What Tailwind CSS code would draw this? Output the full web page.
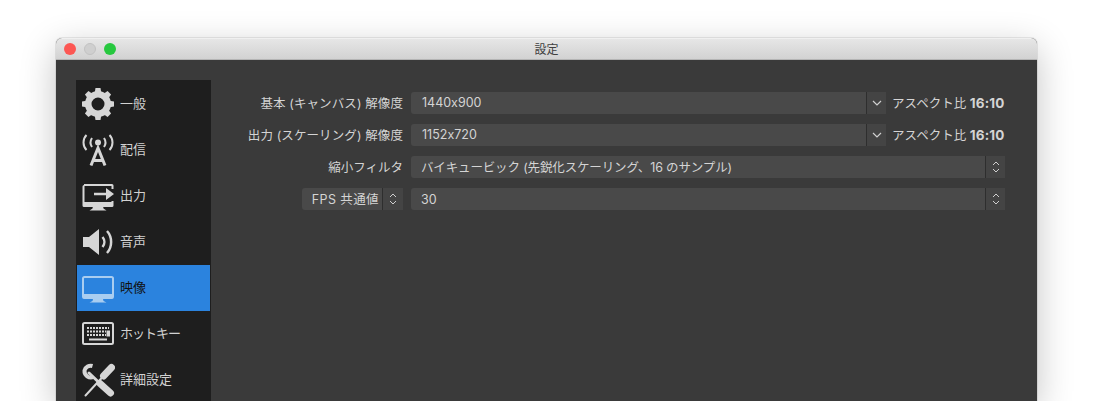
<!DOCTYPE html>
<html lang="ja">
<head>
    <meta charset="UTF-8">
    <title>設定</title>
    <script src="https://cdn.jsdelivr.net/npm/@tailwindcss/browser@4"></script>
</head>
<body class="bg-white h-[401px] overflow-hidden font-['Inter','Noto_Sans_CJK_JP',sans-serif] [font-feature-settings:'calt'_0]">
    <div class="ml-[56px] mt-[38px] w-[981px] h-[363px] rounded-t-[6px] overflow-hidden shadow-[0_10px_36px_rgba(0,0,0,0.24),0_0_0_1px_rgba(0,0,0,0.08)] bg-[#3a3a3a]">
        <!-- title bar -->
        <div class="relative h-[22px] bg-gradient-to-b from-[#e6e6e6] to-[#d2d2d2] border-t border-b border-t-[#f0f0f0] border-b-[#b4b4b4] flex items-center justify-center">
            <div class="absolute left-[8px] top-[4px] flex gap-[8px]">
                <div class="w-[12px] h-[12px] rounded-full bg-[#fc5753]"></div>
                <div class="w-[12px] h-[12px] rounded-full bg-[#cfcfcf] border border-[#c2c2c2]"></div>
                <div class="w-[12px] h-[12px] rounded-full bg-[#27c83f]"></div>
            </div>
            <span class="text-[12px] pt-[2px] text-[#404040]">設定</span>
        </div>

        <div class="flex pl-[20px] pt-[20px]">
            <!-- sidebar -->
            <div class="w-[135px] h-[330px] bg-[#1e1e1e] px-px pt-px shrink-0 text-[13px] text-[#d2d2d2]">
                <div class="h-[46px] flex items-center">
                    <svg class="ml-[4px] w-[34px] h-[34px]" viewBox="0 0 34 34" fill="#d6d6d6">
                        <circle cx="17" cy="17" r="9.750" fill="none" stroke="#d6d6d6" stroke-width="6.500"/>
                        <path d="M14.500 1h5l1 6h-7z"/>
                        <path transform="rotate(45 17 17)" d="M14.500 1h5l1 6h-7z"/>
                        <path transform="rotate(90 17 17)" d="M14.500 1h5l1 6h-7z"/>
                        <path transform="rotate(135 17 17)" d="M14.500 1h5l1 6h-7z"/>
                        <path transform="rotate(180 17 17)" d="M14.500 1h5l1 6h-7z"/>
                        <path transform="rotate(225 17 17)" d="M14.500 1h5l1 6h-7z"/>
                        <path transform="rotate(270 17 17)" d="M14.500 1h5l1 6h-7z"/>
                        <path transform="rotate(315 17 17)" d="M14.500 1h5l1 6h-7z"/>
                    </svg>
                    <span class="ml-[5px]">一般</span>
                </div>
                <div class="h-[46px] flex items-center">
                    <svg class="ml-[4px] w-[34px] h-[34px]" viewBox="0 0 34 34" fill="none" stroke="#d6d6d6">
                        <circle cx="17" cy="9.500" r="3" fill="#d6d6d6" stroke="none"/>
                        <path stroke-width="2" d="M11 5c-2 3-2 6 0 9M23 5c2 3 2 6 0 9"/>
                        <path stroke-width="2" d="M5.500 2c-4 4-4 11 0 15M28.500 2c4 4 4 11 0 15"/>
                        <path stroke-width="3" d="M10 32.500L17 15l7 17.500M12.500 27.500h9"/>
                    </svg>
                    <span class="ml-[5px]">配信</span>
                </div>
                <div class="h-[46px] flex items-center">
                    <svg class="ml-[4px] w-[34px] h-[30px]" viewBox="0 0 34 30" fill="#d6d6d6">
                        <path d="M3 3h28a1.500 1.500 0 0 1 1.500 1.500v3.500h-2v-3h-27v16h27v-1h2v4.500a1.500 1.500 0 0 1-1.500 1.500h-28a1.500 1.500 0 0 1-1.500-1.500v-19a1.500 1.500 0 0 1 1.500-1.500z"/>
                        <path d="M12 25h10l.5 2.500 3 2h-17l3-2zM13 11.700h12v-4.700l8 6-8 6v-4.700h-12z"/>
                    </svg>
                    <span class="ml-[5px]">出力</span>
                </div>
                <div class="h-[46px] flex items-center">
                    <svg class="ml-[4px] w-[34px] h-[30px]" viewBox="0 0 34 30" fill="#d6d6d6">
                        <path d="M2 10h6l10-8v26l-10-8h-6z"/>
                        <path fill="none" stroke="#d6d6d6" stroke-width="2.500" d="M21.500 10c2.500 3 2.500 7 0 10M26 4c5.500 6 5.500 16 0 22"/>
                    </svg>
                    <span class="ml-[5px]">音声</span>
                </div>
                <div class="h-[46px] flex items-center bg-[#2b83de] text-[#111]">
                    <svg class="ml-[4px] w-[34px] h-[30px]" viewBox="0 0 34 30" fill="none">
                        <rect x="2" y="4" width="30" height="21" rx="1.500" stroke="#a9cdf0" stroke-width="2"/>
                        <path fill="#a9cdf0" d="M2 21h30v3a2 2 0 0 1-2 2h-26a2 2 0 0 1-2-2z"/>
                        <path fill="#a9cdf0" d="M12 26h10l.5 2 3 1.500h-17l3-1.500z"/>
                    </svg>
                    <span class="ml-[5px]">映像</span>
                </div>
                <div class="h-[46px] flex items-center">
                    <svg class="ml-[4px] w-[34px] h-[26px]" viewBox="0 0 34 26" fill="none">
                        <rect x="2" y="2" width="30" height="21" rx="1.500" stroke="#d6d6d6" stroke-width="2"/>
                        <path stroke="#d6d6d6" stroke-width="2" stroke-dasharray="2 1" d="M6 7h22M6 10.500h19M6 14h19"/>
                        <path stroke="#d6d6d6" stroke-width="2" d="M8 18.500h18"/>
                        <path fill="#d6d6d6" d="M25.500 9.500h3.500v6h-3.500z"/>
                    </svg>
                    <span class="ml-[5px] tracking-[-1px]">ホットキー</span>
                </div>
                <div class="h-[46px] flex items-center">
                    <svg class="ml-[4px] w-[34px] h-[34px]" viewBox="0 0 34 34" fill="none" stroke="#d6d6d6" stroke-linecap="round">
                        <path stroke-width="7" d="M30.500 4.500L22.500 13"/>
                        <path stroke-width="2" d="M22.500 13L4.500 32.500"/>
                        <path stroke-width="3" d="M8 10L18 19.500"/>
                        <path stroke-width="7" d="M19 20.500L29.500 30"/>
                        <path stroke-width="4" stroke-linecap="butt" d="M11.500 3A6.500 6.500 0 0 0 3.500 7.500A6.500 6.500 0 0 0 12.500 14"/>
                    </svg>
                    <span class="ml-[5px]">詳細設定</span>
                </div>
            </div>

            <!-- form -->
            <div class="ml-[36px] w-[758px] pt-[12px] flex flex-col gap-[10px] text-[12.500px] text-[#d4d4d4]">
                <div class="flex items-center h-[22px]">
                    <div class="w-[156px] pt-[2px] text-right whitespace-nowrap tracking-[0.1px]">基本 (キャンバス) 解像度</div>
                    <div class="ml-[8px] w-[475px] h-[22px] flex bg-[#494949] rounded-[3px]">
                        <div class="flex-1 pl-[11px] leading-[21px]">1440x900</div>
                        <div class="w-[20px] border-l border-[#2e2e2e] flex items-center justify-center bg-[#444]">
                            <svg class="w-[10px] h-[6px]" viewBox="0 0 10 6" fill="none" stroke="#cfcfcf" stroke-width="1.200"><path d="M1 1l4 4 4-4"/></svg>
                        </div>
                    </div>
                    <div class="ml-[6px] whitespace-nowrap">アスペクト比 <b class="text-[13.500px] tracking-[0.2px]">16:10</b></div>
                </div>
                <div class="flex items-center h-[22px]">
                    <div class="w-[156px] pt-[2px] text-right whitespace-nowrap tracking-[0.1px]">出力 (スケーリング) 解像度</div>
                    <div class="ml-[8px] w-[475px] h-[22px] flex bg-[#494949] rounded-[3px]">
                        <div class="flex-1 pl-[11px] leading-[21px]">1152x720</div>
                        <div class="w-[20px] border-l border-[#2e2e2e] flex items-center justify-center bg-[#444]">
                            <svg class="w-[10px] h-[6px]" viewBox="0 0 10 6" fill="none" stroke="#cfcfcf" stroke-width="1.200"><path d="M1 1l4 4 4-4"/></svg>
                        </div>
                    </div>
                    <div class="ml-[6px] whitespace-nowrap">アスペクト比 <b class="text-[13.500px] tracking-[0.2px]">16:10</b></div>
                </div>
                <div class="flex items-center h-[22px]">
                    <div class="w-[156px] pt-[2px] text-right whitespace-nowrap">縮小フィルタ</div>
                    <div class="ml-[8px] w-[594px] h-[22px] flex bg-[#494949] rounded-[3px]">
                        <div class="flex-1 pl-[10px] leading-[24px] tracking-[-0.15px]">バイキュービック (先鋭化スケーリング、16 のサンプル)</div>
                        <div class="w-[20px] border-l border-[#2e2e2e] flex items-center justify-center bg-[#444]">
                            <svg class="w-[8px] h-[14px]" viewBox="0 0 8 14" fill="none" stroke="#cfcfcf"><path d="M1 5l3-3 3 3M1 9l3 3 3-3"/></svg>
                        </div>
                    </div>
                </div>
                <div class="flex items-center h-[22px]">
                    <div class="w-[156px] flex justify-end">
                        <div class="w-[101px] h-[22px] flex bg-[#494949] rounded-[3px]">
                            <div class="flex-1 text-right pr-[3px] leading-[24px] whitespace-nowrap tracking-[0.4px]">FPS 共通値</div>
                            <div class="w-[21px] border-l border-[#2e2e2e] flex items-center justify-center bg-[#444]">
                                <svg class="w-[8px] h-[14px]" viewBox="0 0 8 14" fill="none" stroke="#cfcfcf"><path d="M1 5l3-3 3 3M1 9l3 3 3-3"/></svg>
                            </div>
                        </div>
                    </div>
                    <div class="ml-[8px] w-[594px] h-[22px] flex bg-[#494949] rounded-[3px]">
                        <div class="flex-1 pl-[10px] leading-[24px]">30</div>
                        <div class="w-[20px] border-l border-[#2e2e2e] flex items-center justify-center bg-[#444]">
                            <svg class="w-[8px] h-[14px]" viewBox="0 0 8 14" fill="none" stroke="#cfcfcf"><path d="M1 5l3-3 3 3M1 9l3 3 3-3"/></svg>
                        </div>
                    </div>
                </div>
            </div>
        </div>
    </div>
</body>
</html>
